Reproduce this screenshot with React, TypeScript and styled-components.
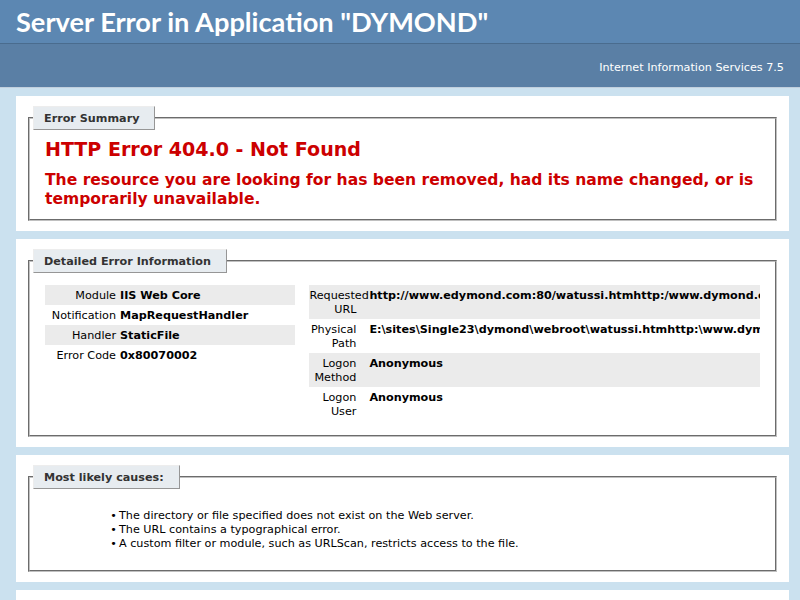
import React from 'react';
import styled, { createGlobalStyle } from 'styled-components';

const GlobalStyle = createGlobalStyle`
  html {
    overflow: hidden;
  }
  body {
    margin: 0;
    font-family: "DejaVu Sans", Verdana, sans-serif;
    font-size: 11.2px;
    line-height: 14px;
    background: #cbe1ef;
    color: #000;
  }
`;

const Header = styled.header`
  padding: 6px 2%;
  background: #5c87b2;
  color: #fff;
`;

const Title = styled.h1`
  margin: 0;
  font-family: Lato, "DejaVu Sans", sans-serif;
  font-size: 27.2px;
  line-height: 31px;
  font-weight: bold;
  color: #fff;
`;

const ServerVersion = styled.div`
  padding: 12px 2% 7px 2%;
  background: #5a7fa5;
  border-top: 1px solid #4a6c8e;
  border-bottom: 1px solid #c1cfdd;
  color: #fff;
  text-align: right;

  p {
    margin: 5px 0;
  }
`;

const Content = styled.main`
  margin: 0 0 0 2%;
`;

const Container = styled.section`
  width: 96%;
  margin-top: 8px;
  padding: 10px;
  background: #fff;
`;

const Fieldset = styled.fieldset`
  margin: 0 2px;
  padding: 0 15px 10px 15px;
  min-width: 0;
  border: 2px groove #c0c0c0;
`;

const Legend = styled.legend`
  margin: 0 0 8px -12px;
  padding: 5px 15px 3px 10px;
  line-height: 14px;
  color: #333;
  background: #e7ecf0;
  border-top: 1px solid #ededed;
  border-left: 1px solid #ededed;
  border-right: 1px solid #969696;
  border-bottom: 1px solid #969696;
  font-weight: bold;
  font-size: 1em;
`;

const ErrorTitle = styled.h2`
  margin: 0;
  font-size: 19.04px;
  line-height: 23px;
  color: #cc0000;
`;

const ErrorMessage = styled.h3`
  margin: 10px 0 0 0;
  font-size: 15.55px;
  line-height: 19px;
  color: #cc0000;
`;

const Details = styled.div`
  display: flex;
  gap: 2%;
`;

const DetailColumn = styled.div<{ $width: string }>`
  width: ${(p) => p.$width};
  flex: none;
  overflow: hidden;
  margin: 4px 0;
`;

const Row = styled.div<{ $alt?: boolean }>`
  display: flex;
  padding: 4px 0 2px;
  background: ${(p) => (p.$alt ? '#ebebeb' : 'transparent')};
`;

const Label = styled.div<{ $width: number; $gap: number }>`
  flex: none;
  width: ${(p) => p.$width}px;
  padding-right: ${(p) => p.$gap}px;
  text-align: right;
`;

const Value = styled.div`
  font-weight: bold;
  white-space: nowrap;
`;

const Causes = styled.ul`
  margin: 12px 0 9px 40px;
  padding-left: 34px;

  li {
    margin: 0;
  }

  li::marker {
    content: '\\2022\\2009';
  }
`;

const leftRows = [
  ['Module', 'IIS Web Core'],
  ['Notification', 'MapRequestHandler'],
  ['Handler', 'StaticFile'],
  ['Error Code', '0x80070002'],
];

const rightRows = [
  ['Requested URL', 'http://www.edymond.com:80/watussi.htmhttp:/www.dymond.com/watussi.htm'],
  ['Physical Path', 'E:\\sites\\Single23\\dymond\\webroot\\watussi.htmhttp:\\www.dymond.com\\watussi.htm'],
  ['Logon Method', 'Anonymous'],
  ['Logon User', 'Anonymous'],
];

export default function App() {
  return (
    <>
      <GlobalStyle />
      <Header>
        <Title>Server Error in Application "DYMOND"</Title>
      </Header>
      <ServerVersion>
        <p>Internet Information Services 7.5</p>
      </ServerVersion>
      <Content>
        <Container>
          <Fieldset>
            <Legend>Error Summary</Legend>
            <ErrorTitle>HTTP Error 404.0 - Not Found</ErrorTitle>
            <ErrorMessage>
              The resource you are looking for has been removed, had its name changed, or is
              temporarily unavailable.
            </ErrorMessage>
          </Fieldset>
        </Container>

        <Container>
          <Fieldset>
            <Legend>Detailed Error Information</Legend>
            <Details>
              <DetailColumn $width="35%">
                {leftRows.map(([label, value], i) => (
                  <Row key={label} $alt={i % 2 === 0}>
                    <Label $width={71} $gap={4}>{label}</Label>
                    <Value>{value}</Value>
                  </Row>
                ))}
              </DetailColumn>
              <DetailColumn $width="63%">
                {rightRows.map(([label, value], i) => (
                  <Row key={label} $alt={i % 2 === 0}>
                    <Label $width={47} $gap={13}>{label}</Label>
                    <Value>{value}</Value>
                  </Row>
                ))}
              </DetailColumn>
            </Details>
          </Fieldset>
        </Container>

        <Container>
          <Fieldset>
            <Legend>Most likely causes:</Legend>
            <Causes>
              <li>The directory or file specified does not exist on the Web server.</li>
              <li>The URL contains a typographical error.</li>
              <li>A custom filter or module, such as URLScan, restricts access to the file.</li>
            </Causes>
          </Fieldset>
        </Container>

        <Container>
          <Fieldset>
            <Legend>Things you can try:</Legend>
            <Causes>
              <li>Create the content on the Web server.</li>
              <li>Review the browser URL.</li>
              <li>Create a tracing rule to track failed requests for this HTTP status code.</li>
            </Causes>
          </Fieldset>
        </Container>
      </Content>
    </>
  );
}
